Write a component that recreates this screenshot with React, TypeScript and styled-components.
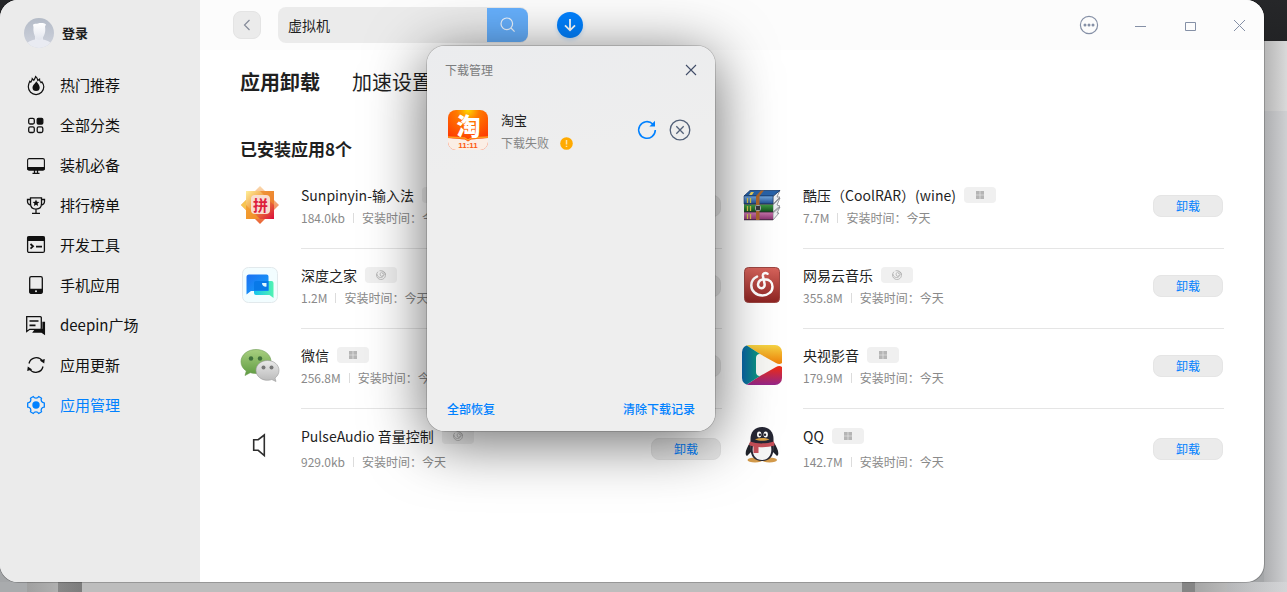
import React from 'react';
import styled, { createGlobalStyle, css } from 'styled-components';

const GlobalStyle = createGlobalStyle`
  *, *::before, *::after { box-sizing: border-box; }
  body {
    margin: 0;
    font-family: "Noto Sans CJK SC", "Noto Sans", sans-serif;
    font-size: 14px;
    color: #1f1f1f;
  }
  button, input { font: inherit; color: inherit; border: 0; margin: 0; padding: 0; background: none; }
  button { cursor: pointer; }
  a { color: inherit; text-decoration: none; }
  ul { list-style: none; margin: 0; padding: 0; }
  h1, h2, h3, p { margin: 0; font-size: inherit; font-weight: inherit; }
  svg { display: block; flex: none; }
`;

/* ---------- shell ---------- */

const Desktop = styled.div`
  min-height: 100vh;
  padding: 0 23px 10px 0;
  display: flex;
  overflow: hidden;
  background:
    linear-gradient(to right, #a9abad 0 27px, #a0a0a0 27px, #b0b0b0 58px, #888888 58px, #7c7c7c 82px, #bdbdbd 82px calc(100% - 105px), #858585 calc(100% - 105px) calc(100% - 92px), #a6a6a6 calc(100% - 92px), #b8b8b8 calc(100% - 60px), #b6b7b9 calc(100% - 60px), #d4d5d7 100%) bottom / 100% 10px no-repeat,
    linear-gradient(#262729, #222325) right top / 100% 41px no-repeat,
    linear-gradient(to right, #b5b5b5, #d9d9d9) right 41px / 23px 70px no-repeat,
    linear-gradient(to right, #adaeb0, #cfd0d2) right bottom / 23px 100% no-repeat,
    #a4a6a8;
`;

const Window = styled.div`
  flex: 1;
  min-width: 0;
  display: flex;
  border-radius: 18px;
  background: #ffffff;
  box-shadow: 0 0 0 1px rgba(0, 0, 0, 0.2);
`;

const Sidebar = styled.aside`
  flex: none;
  width: 200px;
  padding-top: 18px;
  background: #ebebeb;
  border-radius: 18px 0 0 18px;
`;

const Account = styled.button`
  display: flex;
  align-items: center;
  gap: 8px;
  margin-left: 24px;
  height: 30px;
  font-size: 13px;
  line-height: 20px;
  font-weight: 700;
`;

const NavList = styled.ul`
  padding-top: 17px;
`;

const NavLink = styled.a<{ $active?: boolean }>`
  display: flex;
  align-items: center;
  gap: 12px;
  height: 40px;
  padding-left: 24px;
  font-size: 15px;
  line-height: 20px;
  color: ${p => (p.$active ? '#0081ff' : '#111111')};
`;

const Main = styled.div`
  flex: 1;
  min-width: 0;
  display: flex;
  flex-direction: column;
`;

/* ---------- title bar ---------- */

const TitleBar = styled.header`
  display: flex;
  align-items: center;
  height: 50px;
  padding-left: 33px;
  background: #fcfcfc;
  border-radius: 0 18px 0 0;
`;

const BackButton = styled.button`
  display: grid;
  place-items: center;
  width: 28px;
  height: 28px;
  border-radius: 8px;
  border: 1px solid #e4e4e4;
  background: #ebebeb;
`;

const SearchBox = styled.form`
  display: flex;
  align-items: center;
  width: 250px;
  height: 36px;
  margin-left: 17px;
  border-radius: 8px;
  background: #ebebeb;
`;

const SearchInput = styled.input`
  flex: 1;
  min-width: 0;
  height: 34px;
  padding-left: 10px;
  font-size: 14px;
  outline: none;
`;

const SearchButton = styled.button`
  display: grid;
  place-items: center;
  width: 41px;
  height: 34px;
  border-radius: 0 8px 8px 0;
  background: #66b0fd;
`;

const DownloadAnchor = styled.div`
  position: relative;
  z-index: 2;
  display: grid;
  place-items: center;
  width: 30px;
  height: 30px;
  margin-left: 27px;
`;

const DownloadButton = styled.button`
  display: grid;
  place-items: center;
  width: 26px;
  height: 26px;
  border-radius: 50%;
  background: #0081ff;
  box-shadow: 0 2px 4px rgba(0, 129, 255, 0.2);
`;

const WindowControls = styled.div`
  display: flex;
  margin-left: auto;
`;

const ControlButton = styled.button`
  display: grid;
  place-items: center;
  width: 50px;
  height: 50px;
`;

/* ---------- download popover ---------- */

const Popover = styled.section`
  position: absolute;
  top: 36px;
  left: -128px;
  display: flex;
  flex-direction: column;
  width: 288px;
  height: 385px;
  padding: 13px 0 12px;
  border-radius: 18px;
  background: linear-gradient(170deg, #ebecee, #eeeeee 30%, #eeeeee);
  box-shadow: 0 0 0 1px rgba(0, 0, 0, 0.15), 0 10px 60px rgba(0, 0, 0, 0.6);
`;

const PopoverHeader = styled.div`
  display: flex;
  align-items: center;
  justify-content: space-between;
  height: 22px;
  padding: 0 13px 0 18px;
  font-size: 12px;
  line-height: 20px;
  color: #7b7c7d;
`;

const IconButton = styled.button`
  display: grid;
  place-items: center;
  width: 22px;
  height: 22px;
`;

const DownloadItem = styled.div`
  display: flex;
  align-items: flex-start;
  gap: 13px;
  margin-top: 29px;
  padding: 0 24px 0 21px;
`;

const DownloadInfo = styled.div`
  flex: 1;
  display: grid;
  gap: 3px;
`;

const DownloadName = styled.h3`
  font-size: 13px;
  line-height: 20px;
`;

const DownloadStatus = styled.p`
  display: flex;
  align-items: center;
  gap: 11px;
  font-size: 12px;
  line-height: 20px;
  color: #858585;
`;

const DownloadActions = styled.div`
  display: flex;
  gap: 11px;
  padding-top: 9px;
`;

const PopoverFooter = styled.div`
  display: flex;
  justify-content: space-between;
  margin-top: auto;
  padding: 0 20px;
`;

const TextButton = styled.button`
  font-size: 12px;
  line-height: 20px;
  font-weight: 500;
  color: #0081ff;
`;

/* ---------- installed apps ---------- */

const Content = styled.main`
  padding: 16px 40px 40px;
`;

const Tabs = styled.div`
  display: flex;
  gap: 32px;
`;

const Tab = styled.button<{ $active?: boolean }>`
  font-size: 20px;
  line-height: 32px;
  font-weight: ${p => (p.$active ? 700 : 400)};
`;

const SectionTitle = styled.h2`
  margin-top: 39px;
  font-size: 17px;
  line-height: 24px;
  font-weight: 700;
`;

const AppGrid = styled.ul`
  display: grid;
  grid-template-columns: 1fr 1fr;
  column-gap: 20px;
  margin-top: 8px;
`;

const AppRow = styled.li`
  display: flex;
  gap: 21px;
  height: 80px;
`;

const AppIcon = styled.div`
  flex: none;
  width: 40px;
  height: 40px;
  margin-top: 16px;
`;

const AppBody = styled.div<{ $last: boolean }>`
  flex: 1;
  min-width: 0;
  display: flex;
  justify-content: space-between;
  align-items: flex-start;
  padding: 16px 1px 0 0;
  border-bottom: 1px solid #e5e5e5;
  ${p =>
    p.$last &&
    css`
      padding-top: 17px;
      border-bottom: 0;
    `}
`;

const AppInfo = styled.div<{ $last: boolean }>`
  display: grid;
  row-gap: ${p => (p.$last ? 7 : 4)}px;
`;

const AppTitle = styled.div`
  display: flex;
  align-items: center;
  gap: 8px;
  height: 20px;
`;

const AppName = styled.h3`
  font-size: 14px;
  line-height: 20px;
  white-space: nowrap;
`;

const Badge = styled.span`
  display: grid;
  place-items: center;
  width: 32px;
  height: 16px;
  border-radius: 4px;
  background: #f0f0f0;
`;

const AppMeta = styled.p`
  display: flex;
  align-items: center;
  gap: 8px;
  font-size: 12px;
  line-height: 18px;
  color: #8a8a8a;
  white-space: nowrap;
`;

const MetaRule = styled.span`
  width: 1px;
  height: 10px;
  background: #dcdcdc;
`;

const RemoveButton = styled.button<{ $last: boolean }>`
  width: 70px;
  height: 22px;
  margin-top: ${p => (p.$last ? 12 : 10)}px;
  border: 1px solid #e5e5e5;
  border-radius: 8px;
  background: #ebebeb;
  font-size: 12px;
  line-height: 20px;
  color: #0081ff;
`;

/* ---------- sidebar icons ---------- */

const Glyph = ({ children }: { children: React.ReactNode }) => (
  <svg width="24" height="24" viewBox="0 0 24 24" fill="none" stroke="currentColor" strokeWidth="1.3" aria-hidden="true">
    {children}
  </svg>
);

const Avatar = () => (
  <svg width="30" height="30" viewBox="0 0 30 30" aria-hidden="true">
    <defs>
      <linearGradient id="av" x1="0" y1="0" x2="0" y2="1">
        <stop offset="0" stopColor="#b4bbc7" />
        <stop offset="1" stopColor="#cfd3dd" />
      </linearGradient>
      <linearGradient id="avb" x1="0" y1="0" x2="0" y2="1">
        <stop offset="0" stopColor="#fff" />
        <stop offset="1" stopColor="#e3e6ee" />
      </linearGradient>
      <clipPath id="avc"><circle cx="15" cy="15" r="15" /></clipPath>
    </defs>
    <g clipPath="url(#avc)">
      <rect width="30" height="30" fill="url(#av)" />
      <path d="M1 30c0-5 4-7 10-8.500V18h8v3.500c6 1.500 10 3.500 10 8.500z" fill="#e9ebf2" />
      <path d="M9 7c1-2 3-1 5-1.500 2-.5 6-.8 8 1l-1 2c1 6-1 9-2.500 12-1.500 1.800-5 1.800-6.500 0C10 17 9 13 9.500 9z" fill="url(#avb)" />
    </g>
  </svg>
);

const GEAR = 'M9.300 3.500a3 3 0 0 0 5.400 0l2.900 1.700a3 3 0 0 0 2.700 4.600v4.400a3 3 0 0 0-2.700 4.600l-2.900 1.700a3 3 0 0 0-5.400 0l-2.900-1.700a3 3 0 0 0-2.700-4.600V9.800a3 3 0 0 0 2.700-4.600z';

const navItems: { label: string; active?: boolean; icon: React.ReactNode }[] = [
  {
    label: '热门推荐',
    icon: (
      <>
        <path d="M6.800 9.200C7.600 8 8.200 7 8.300 5.600l1.500 1.700C10.600 6 11.300 5 11.600 3.600c1.300 1 2 2.200 2.200 3.900l1.700-1.300c0 1.500.5 2.500 1.500 3.500l.9-.8c1.400 2 1.900 3.400 1.900 4.900a7.600 7.600 0 0 1-15.500 0c0-1.900.6-3.600 1.500-5.500z" strokeWidth="1.200" />
        <path d="M12.200 8.200c1.600 2.200 3.500 4 3.500 6.300a3.600 3.600 0 0 1-7.200 0c0-1.700 1-2.700 2-3.800.8-.9 1.400-1.600 1.700-2.500z" fill="currentColor" stroke="none" />
      </>
    ),
  },
  {
    label: '全部分类',
    icon: (
      <>
        <rect x="4.700" y="5.400" width="5.600" height="5.600" rx="1.500" />
        <rect x="13.200" y="5.400" width="5.600" height="5.600" rx="1.200" fill="currentColor" />
        <rect x="4.700" y="13.900" width="5.600" height="5.600" rx="1.500" />
        <rect x="13.200" y="13.900" width="5.600" height="5.600" rx="1.500" />
      </>
    ),
  },
  {
    label: '装机必备',
    icon: (
      <>
        <rect x="3.600" y="5.600" width="16.800" height="11.400" rx="1.500" strokeWidth="1.100" />
        <path d="M3 14h18v1.500a2 2 0 0 1-2 2H5a2 2 0 0 1-2-2z" fill="currentColor" stroke="none" />
        <path d="M10.500 17v3M13.500 17v3M8.500 20.400h7" />
      </>
    ),
  },
  {
    label: '排行榜单',
    icon: (
      <>
        <path d="M6.500 4.800h11v6c0 3.200-2 5.300-5.500 5.300s-5.500-2.100-5.500-5.300zM6.500 6.500h-3v2c0 2 1.300 3.200 3.500 3.500M17.500 6.500h3v2c0 2-1.300 3.200-3.500 3.500M12 16v4M8 20.400h8" />
        <path d="m12 6.500 1 2.200 2.400.2-1.800 1.600.5 2.400-2.100-1.200-2.100 1.200.5-2.400-1.800-1.600 2.400-.2z" fill="currentColor" stroke="none" />
      </>
    ),
  },
  {
    label: '开发工具',
    icon: (
      <>
        <rect x="3.600" y="3.600" width="16.800" height="15.800" rx="1.500" />
        <path d="M3.500 3.500h17V8h-17z" fill="currentColor" stroke="none" />
        <path d="m6.500 11 2.500 2.300-2.500 2.300M12 13.700h6" strokeWidth="1.800" />
      </>
    ),
  },
  {
    label: '手机应用',
    icon: (
      <>
        <rect x="5.700" y="3.700" width="12.600" height="16.600" rx="1.500" />
        <path d="M5.500 15.800h13v3.700a1 1 0 0 1-1 1h-11a1 1 0 0 1-1-1z" fill="currentColor" stroke="none" />
        <circle cx="12" cy="18.300" r="1" fill="#ebebeb" stroke="none" />
      </>
    ),
  },
  {
    label: 'deepin广场',
    icon: (
      <>
        <path d="M19 9.500h1.400v11.500L17.500 19H9.500l2-2.500H19z" fill="currentColor" />
        <path d="M2.700 3.700h13.600a1 1 0 0 1 1 1v10.600a1 1 0 0 1-1 1H5.700l-3 2.200z" fill="#ebebeb" />
        <path d="M5.500 8h9M5.500 12.300h6" strokeWidth="1.700" />
      </>
    ),
  },
  {
    label: '应用更新',
    icon: (
      <>
        <path d="M5 10.500A7.400 7.400 0 0 1 18.400 8M19 13.500A7.400 7.400 0 0 1 5.600 16" />
        <path d="m15.800 7.600 5-1.600-.6 4.600zM8.200 16.400l-5 1.600.6-4.600z" fill="currentColor" stroke="none" />
      </>
    ),
  },
  {
    label: '应用管理',
    active: true,
    icon: (
      <>
        <path d={GEAR} strokeLinejoin="round" />
        <circle cx="12" cy="12" r="3.700" fill="currentColor" stroke="none" />
      </>
    ),
  },
];

/* ---------- app icons ---------- */

const Art = ({ children }: { children: React.ReactNode }) => (
  <svg width="40" height="40" viewBox="0 0 40 40" aria-hidden="true">{children}</svg>
);

const SunpinyinIcon = () => (
  <Art>
    <defs>
      <linearGradient id="sp1" x1="0" y1="0" x2="0" y2="1"><stop offset="0" stopColor="#fbd9ac" /><stop offset="1" stopColor="#ea6433" /></linearGradient>
      <linearGradient id="sp2" x1="0" y1="0" x2="1" y2="1"><stop offset="0" stopColor="#fff09a" /><stop offset=".5" stopColor="#ee9035" /><stop offset="1" stopColor="#da0b3c" /></linearGradient>
    </defs>
    <path d="M20 1 39 20 20 39 1 20z" fill="url(#sp1)" />
    <path d="M1 20 10 11v18z" fill="#f7c552" />
    <path d="M6 6h28v28H6z" fill="url(#sp2)" />
    <path d="M20 6h14v14z" fill="#ee8a31" opacity=".8" />
    <path d="M6 20v14h14z" fill="#f29a2b" opacity=".8" />
    <rect x="11" y="10" width="19" height="19" rx="4" fill="#f9ddd0" />
    <text x="20.500" y="25.500" textAnchor="middle" fontSize="15" fontWeight="700" fill="#dd1e3e">拼</text>
  </Art>
);

const CoolRarIcon = () => (
  <Art>
    <defs>
      <linearGradient id="cr1" x1="0" y1="0" x2="0" y2="1"><stop offset="0" stopColor="#74a9df" /><stop offset="1" stopColor="#1d4b91" /></linearGradient>
      <linearGradient id="cr2" x1="0" y1="0" x2="0" y2="1"><stop offset="0" stopColor="#3f9d45" /><stop offset="1" stopColor="#12511c" /></linearGradient>
      <linearGradient id="cr3" x1="0" y1="0" x2="0" y2="1"><stop offset="0" stopColor="#c877ab" /><stop offset="1" stopColor="#87306f" /></linearGradient>
    </defs>
    <path d="m31 12 7-7-3 7 3 0-7 7zM31 20l7-7-3 7 3 1-7 6zM31 28l7-6-3 6 2 0-6 7z" fill="#eceef1" stroke="#6d7079" strokeWidth=".7" />
    <path d="M2 11 8 5.500h30L31 11z" fill="#2862a8" stroke="#163b6d" strokeWidth=".8" />
    <path d="M2 11h29v8H2z" fill="url(#cr1)" stroke="#163b6d" strokeWidth=".6" />
    <path d="M2 19.500h29V27H2z" fill="url(#cr2)" />
    <path d="M2 27h29v8H2z" fill="url(#cr3)" />
    <path d="M2 19.200h29M2 27h29M2 34.800h29" stroke="#2e2734" strokeWidth=".8" />
    <path d="m14 11 5-5.500h3L17.500 11v24H14z" fill="#ad672c" />
    <path d="M5.500 13v5m3-5v5M5.500 21v5m3-5v5M5.500 29v5m3-5v5" stroke="#d4c34b" strokeWidth="1.300" />
    <path d="m9 7-2 3h3l2-3z" fill="#ead05c" />
    <rect x="13.500" y="20.500" width="5" height="5" rx="1" fill="#383a3e" stroke="#a7a9ad" />
  </Art>
);

const DeepinHomeIcon = () => (
  <Art>
    <defs>
      <linearGradient id="dh1" x1="0" y1="0" x2="1" y2="1"><stop offset="0" stopColor="#1c70f2" /><stop offset="1" stopColor="#14a6fa" /></linearGradient>
      <linearGradient id="dh2" x1="0" y1="0" x2="1" y2="0"><stop offset="0" stopColor="#16c4ed" /><stop offset="1" stopColor="#51f3b2" /></linearGradient>
    </defs>
    <rect x="2.500" y="2.500" width="35" height="35" rx="6" fill="#f2fdff" stroke="#e2e9ec" />
    <path d="M14 16h17.500a2 2 0 0 1 2 2v15l-4-3H16a2 2 0 0 1-2-2z" fill="url(#dh2)" />
    <path d="M9 9.500h17.500a2 2 0 0 1 2 2V26H11l-4.500 3.500V12A2.500 2.500 0 0 1 9 9.500z" fill="url(#dh1)" />
    <path d="M14 18a2 2 0 0 1 2-2h12.500v9.500H14z" fill="#0879e8" />
    <path d="M22 18h4.500v3.500a3.500 3.500 0 0 1-4.500-3.500z" fill="#dff8ff" />
  </Art>
);

const NeteaseIcon = () => (
  <Art>
    <defs>
      <linearGradient id="ne" x1="0" y1="0" x2="0" y2="1"><stop offset="0" stopColor="#d8645c" /><stop offset="1" stopColor="#8d2422" /></linearGradient>
    </defs>
    <rect x="2.500" y="2.500" width="35" height="35" rx="4" fill="url(#ne)" stroke="#9c4642" />
    <path d="M25.500 8.800c-2.500-1.500-5-.3-4.600 2.200l1.600 7.600c.7 3-1.200 4.700-3 4.700-2.200 0-3.800-2-3.400-4.300.5-3 3-4.700 6.400-4.700 5 0 8 3.200 8 7.400 0 5-4.300 8.700-10 8.700C14 30.400 9.300 26 9.300 20.400c0-4 2.100-7.300 5.700-8.800" fill="none" stroke="#fff" strokeWidth="2.500" strokeLinecap="round" />
  </Art>
);

const WechatIcon = () => (
  <Art>
    <defs>
      <linearGradient id="wc1" x1="0" y1="0" x2="0" y2="1"><stop offset="0" stopColor="#a8cf80" /><stop offset="1" stopColor="#5f9b41" /></linearGradient>
      <linearGradient id="wc2" x1="0" y1="0" x2="0" y2="1"><stop offset="0" stopColor="#eaeaea" /><stop offset="1" stopColor="#b9b9b9" /></linearGradient>
    </defs>
    <path d="M16 4.500C7.500 4.500 1 9.800 1 16.700c0 3.900 2 7 5.300 9.300L5 30.500l5.200-2.800c1.800.5 3.700.8 5.800.8 8.400 0 15-4.800 15-11.900S24.400 4.500 16 4.500z" fill="url(#wc1)" stroke="#6b9a50" strokeWidth=".6" />
    <path d="M27.500 15.500c-6.300 0-11.500 4.300-11.500 9.900s5.200 9.900 11.500 9.900c1.600 0 3-.3 4.300-.8l4.200 2-1-3.500c2.500-1.800 4-4.500 4-7.600 0-5.600-5.200-9.900-11.500-9.900z" fill="url(#wc2)" stroke="#999" strokeWidth=".6" />
    <circle cx="11" cy="13.500" r="2.200" fill="#3e703b" /><circle cx="20" cy="13.500" r="2.200" fill="#3e703b" />
    <circle cx="23.500" cy="22.500" r="2" fill="#777" /><circle cx="31.500" cy="22.500" r="2" fill="#777" />
  </Art>
);

const CctvIcon = () => (
  <Art>
    <defs>
      <clipPath id="cc"><rect width="40" height="40" rx="7" /></clipPath>
      <linearGradient id="cc1" x1="0" y1="0" x2="0" y2="1"><stop offset="0" stopColor="#f6d443" /><stop offset="1" stopColor="#ee8109" /></linearGradient>
      <linearGradient id="cc2" x1="0" y1="0" x2="0" y2="1"><stop offset="0" stopColor="#f12b10" /><stop offset="1" stopColor="#95268b" /></linearGradient>
      <linearGradient id="cc3" x1="0" y1="0" x2="1" y2="0"><stop offset="0" stopColor="#0a65a7" /><stop offset="1" stopColor="#0b9c7b" /></linearGradient>
    </defs>
    <g clipPath="url(#cc)">
      <rect width="40" height="40" fill="#f8f8f5" />
      <path d="M4 0h36v18c-2 1.500-4 1-6 0L18 9 4 0z" fill="url(#cc1)" />
      <path d="M4 40h36V22c-2-1.500-4-1-6 0L18 31 4 40z" fill="url(#cc2)" />
      <path d="M0 0h4l14 9c-3 0-4 2-4 4v14c0 2 1 4 4 4L4 40H0z" fill="url(#cc3)" />
    </g>
  </Art>
);

const VolumeIcon = () => (
  <Art>
    <path d="M13.700 14.700h4.500L24.300 10v20.500l-6.100-5.200h-4.500z" fill="none" stroke="#2e2e2e" strokeWidth="1.600" />
  </Art>
);

const QqIcon = () => (
  <Art>
    <ellipse cx="13" cy="35" rx="7.500" ry="2.600" fill="#d39a4b" /><ellipse cx="27.500" cy="35" rx="7.500" ry="2.600" fill="#d39a4b" />
    <path d="M8.500 17C3.500 24 2.500 30 5 31l4-4zM31.500 17c5 7 6 13 3.500 14l-4-4z" fill="#20232b" />
    <path d="M20 2c-7.500 0-11.500 5-11.500 12v9C8.500 31 12 36 20 36s11.500-5 11.500-13v-9C31.500 7 27.500 2 20 2z" fill="#262734" />
    <path d="M11 21h18c1.500 8-2 14-9 14s-10.500-6-9-14z" fill="#f6f6f6" />
    <ellipse cx="17.200" cy="9.600" rx="2.200" ry="3" fill="#fff" /><ellipse cx="23.700" cy="9.600" rx="2.200" ry="3" fill="#fff" />
    <circle cx="17.900" cy="9.800" r="1.200" fill="#262734" /><circle cx="23" cy="9.800" r="1.200" fill="#262734" />
    <path d="M13 14.200c5-1.600 9-1.600 14.500 0-4 2.200-10.500 2.200-14.500 0z" fill="#dda344" />
    <path d="M8 16.500c7 2.500 16 2.500 24 0l.5 4c-5 1.500-11 2-16 1.500V28h-5v-6.500C9.500 21 8 20.500 7 20z" fill="#c44f58" />
  </Art>
);

const TaobaoIcon = () => (
  <Art>
    <defs>
      <clipPath id="tb"><rect width="40" height="40" rx="8" /></clipPath>
      <radialGradient id="tbg" cx=".5" cy="0" r=".8"><stop offset="0" stopColor="#ffd800" /><stop offset=".35" stopColor="#ff7a00" /><stop offset="1" stopColor="#fe3b03" /></radialGradient>
    </defs>
    <g clipPath="url(#tb)">
      <rect width="40" height="40" fill="url(#tbg)" />
      <path d="M0 28c7 .5 13 1 17 1.500l3 2 3-2c4-.5 10-1 17-1.500v12H0z" fill="#fbeee5" />
      <path d="M0 27c7 .5 13 .5 16.500 1l3.500 2 3.500-2c3.500-.5 9.500-.5 16.500-1" fill="none" stroke="#ff9c20" strokeWidth="1.400" />
    </g>
    <text x="20.500" y="25" textAnchor="middle" fontSize="24" fontWeight="900" fill="#fff">淘</text>
    <text x="20" y="38" textAnchor="middle" fontSize="8" fontWeight="700" fontFamily="Liberation Sans, sans-serif" fill="#fb5a11">11:11</text>
  </Art>
);

const WineMark = () => (
  <svg width="8" height="8" viewBox="0 0 8 8" fill="#b5b5b5" aria-hidden="true">
    <path d="M0 0h3.700v3.700H0zM4.300 0H8v3.700H4.300zM0 4.300h3.700V8H0zM4.300 4.300H8V8H4.300z" />
  </svg>
);

const DeepinMark = () => (
  <svg width="10" height="10" viewBox="0 0 10 10" fill="none" stroke="#b0b0b0" aria-hidden="true">
    <path d="M2 1.700A4.500 4.500 0 1 0 8.500 2.200M3.500.8A4.500 4.500 0 0 1 9.400 5" strokeWidth=".8" />
    <path d="M8.800 2.500C6 1 3.600 2.600 4.200 5c.4 1.800 3 1.600 2.900-.1M.8 4C1.500 7.500 5 8.500 7 6.500s.5-3.400-.8-3" strokeWidth=".9" />
  </svg>
);

const apps: { name: string; size: string; mark: 'deepin' | 'wine'; icon: React.ReactNode }[] = [
  { name: 'Sunpinyin-输入法', size: '184.0kb', mark: 'deepin', icon: <SunpinyinIcon /> },
  { name: '酷压（CoolRAR）(wine)', size: '7.7M', mark: 'wine', icon: <CoolRarIcon /> },
  { name: '深度之家', size: '1.2M', mark: 'deepin', icon: <DeepinHomeIcon /> },
  { name: '网易云音乐', size: '355.8M', mark: 'deepin', icon: <NeteaseIcon /> },
  { name: '微信', size: '256.8M', mark: 'wine', icon: <WechatIcon /> },
  { name: '央视影音', size: '179.9M', mark: 'wine', icon: <CctvIcon /> },
  { name: 'PulseAudio 音量控制', size: '929.0kb', mark: 'deepin', icon: <VolumeIcon /> },
  { name: 'QQ', size: '142.7M', mark: 'wine', icon: <QqIcon /> },
];

/* ---------- parts ---------- */

const DownloadPopover = () => (
  <Popover aria-label="下载管理">
    <PopoverHeader>
      <h2>下载管理</h2>
      <IconButton aria-label="关闭">
        <svg width="12" height="12" viewBox="0 0 12 12" stroke="#414d68" strokeWidth="1.100"><path d="m1 1 10 10M11 1 1 11" /></svg>
      </IconButton>
    </PopoverHeader>
    <DownloadItem>
      <TaobaoIcon />
      <DownloadInfo>
        <DownloadName>淘宝</DownloadName>
        <DownloadStatus>
          下载失败
          <svg width="13" height="13" viewBox="0 0 13 13" aria-hidden="true">
            <circle cx="6.500" cy="6.500" r="6.300" fill="#ffaa00" />
            <path d="M6.500 3v4.500M6.500 8.700V10" stroke="#ffe3a8" strokeWidth="1.500" />
          </svg>
        </DownloadStatus>
      </DownloadInfo>
      <DownloadActions>
        <IconButton aria-label="重试">
          <svg width="22" height="22" viewBox="0 0 22 22" fill="none">
            <path d="M16.800 5A8.300 8.300 0 1 0 19.300 11" stroke="#0081ff" strokeWidth="1.600" />
            <path d="M19 1.800v5.600h-5.600z" fill="#0081ff" />
          </svg>
        </IconButton>
        <IconButton aria-label="取消">
          <svg width="22" height="22" viewBox="0 0 22 22" fill="none" stroke="#526078" strokeWidth="1.300">
            <circle cx="11" cy="11" r="9.800" /><path d="m7.300 7.300 7.400 7.400M14.700 7.300l-7.400 7.400" />
          </svg>
        </IconButton>
      </DownloadActions>
    </DownloadItem>
    <PopoverFooter>
      <TextButton>全部恢复</TextButton>
      <TextButton>清除下载记录</TextButton>
    </PopoverFooter>
  </Popover>
);

const Header = () => (
  <TitleBar>
    <BackButton aria-label="返回">
      <svg width="10" height="14" viewBox="0 0 10 14" fill="none" stroke="#858b99" strokeWidth="1.200"><path d="M7.500 2 2.500 7l5 5" /></svg>
    </BackButton>
    <SearchBox onSubmit={e => e.preventDefault()}>
      <SearchInput aria-label="搜索" defaultValue="虚拟机" />
      <SearchButton aria-label="搜索">
        <svg width="16" height="16" viewBox="0 0 16 16" fill="none" stroke="#eef6ff" strokeWidth="1.200"><circle cx="6.800" cy="6.800" r="5.800" /><path d="m11 11 3.600 3.600" /></svg>
      </SearchButton>
    </SearchBox>
    <DownloadAnchor>
      <DownloadPopover />
      <DownloadButton aria-label="下载">
        <svg width="14" height="14" viewBox="0 0 14 14" fill="none" stroke="#fff" strokeWidth="1.800"><path d="M7 1v11M2 7.300l5 5 5-5" /></svg>
      </DownloadButton>
    </DownloadAnchor>
    <WindowControls>
      <ControlButton aria-label="菜单">
        <svg width="20" height="20" viewBox="0 0 20 20" fill="none" stroke="#8590a6" strokeWidth="1.200"><circle cx="10" cy="10" r="8.600" /><g fill="#8590a6" stroke="none"><circle cx="6" cy="10" r="1.500" /><circle cx="10" cy="10" r="1.500" /><circle cx="14" cy="10" r="1.500" /></g></svg>
      </ControlButton>
      <ControlButton aria-label="最小化">
        <svg width="14" height="14" viewBox="0 0 14 14" stroke="#8590a6"><path d="M3 8.500h11" /></svg>
      </ControlButton>
      <ControlButton aria-label="最大化">
        <svg width="14" height="14" viewBox="0 0 14 14" fill="none" stroke="#8590a6"><path d="M3.500 4.500h10v8h-10z" /></svg>
      </ControlButton>
      <ControlButton aria-label="关闭">
        <svg width="14" height="14" viewBox="0 0 14 14" stroke="#8590a6"><path d="m2 2 11 11M13 2 2 13" /></svg>
      </ControlButton>
    </WindowControls>
  </TitleBar>
);

export default function App() {
  return (
    <>
      <GlobalStyle />
      <Desktop>
        <Window>
          <Sidebar>
            <Account><Avatar />登录</Account>
            <nav>
              <NavList>
                {navItems.map(item => (
                  <li key={item.label}>
                    <NavLink href="#" $active={item.active}>
                      <Glyph>{item.icon}</Glyph>
                      {item.label}
                    </NavLink>
                  </li>
                ))}
              </NavList>
            </nav>
          </Sidebar>
          <Main>
            <Header />
            <Content>
              <Tabs>
                <Tab $active>应用卸载</Tab>
                <Tab>加速设置</Tab>
              </Tabs>
              <SectionTitle>已安装应用8个</SectionTitle>
              <AppGrid>
                {apps.map((app, i) => {
                  const last = i >= apps.length - 2;
                  return (
                    <AppRow key={app.name}>
                      <AppIcon>{app.icon}</AppIcon>
                      <AppBody $last={last}>
                        <AppInfo $last={last}>
                          <AppTitle>
                            <AppName>{app.name}</AppName>
                            <Badge>{app.mark === 'wine' ? <WineMark /> : <DeepinMark />}</Badge>
                          </AppTitle>
                          <AppMeta>
                            <span>{app.size}</span>
                            <MetaRule />
                            <span>安装时间：今天</span>
                          </AppMeta>
                        </AppInfo>
                        <RemoveButton $last={last}>卸载</RemoveButton>
                      </AppBody>
                    </AppRow>
                  );
                })}
              </AppGrid>
            </Content>
          </Main>
        </Window>
      </Desktop>
    </>
  );
}
